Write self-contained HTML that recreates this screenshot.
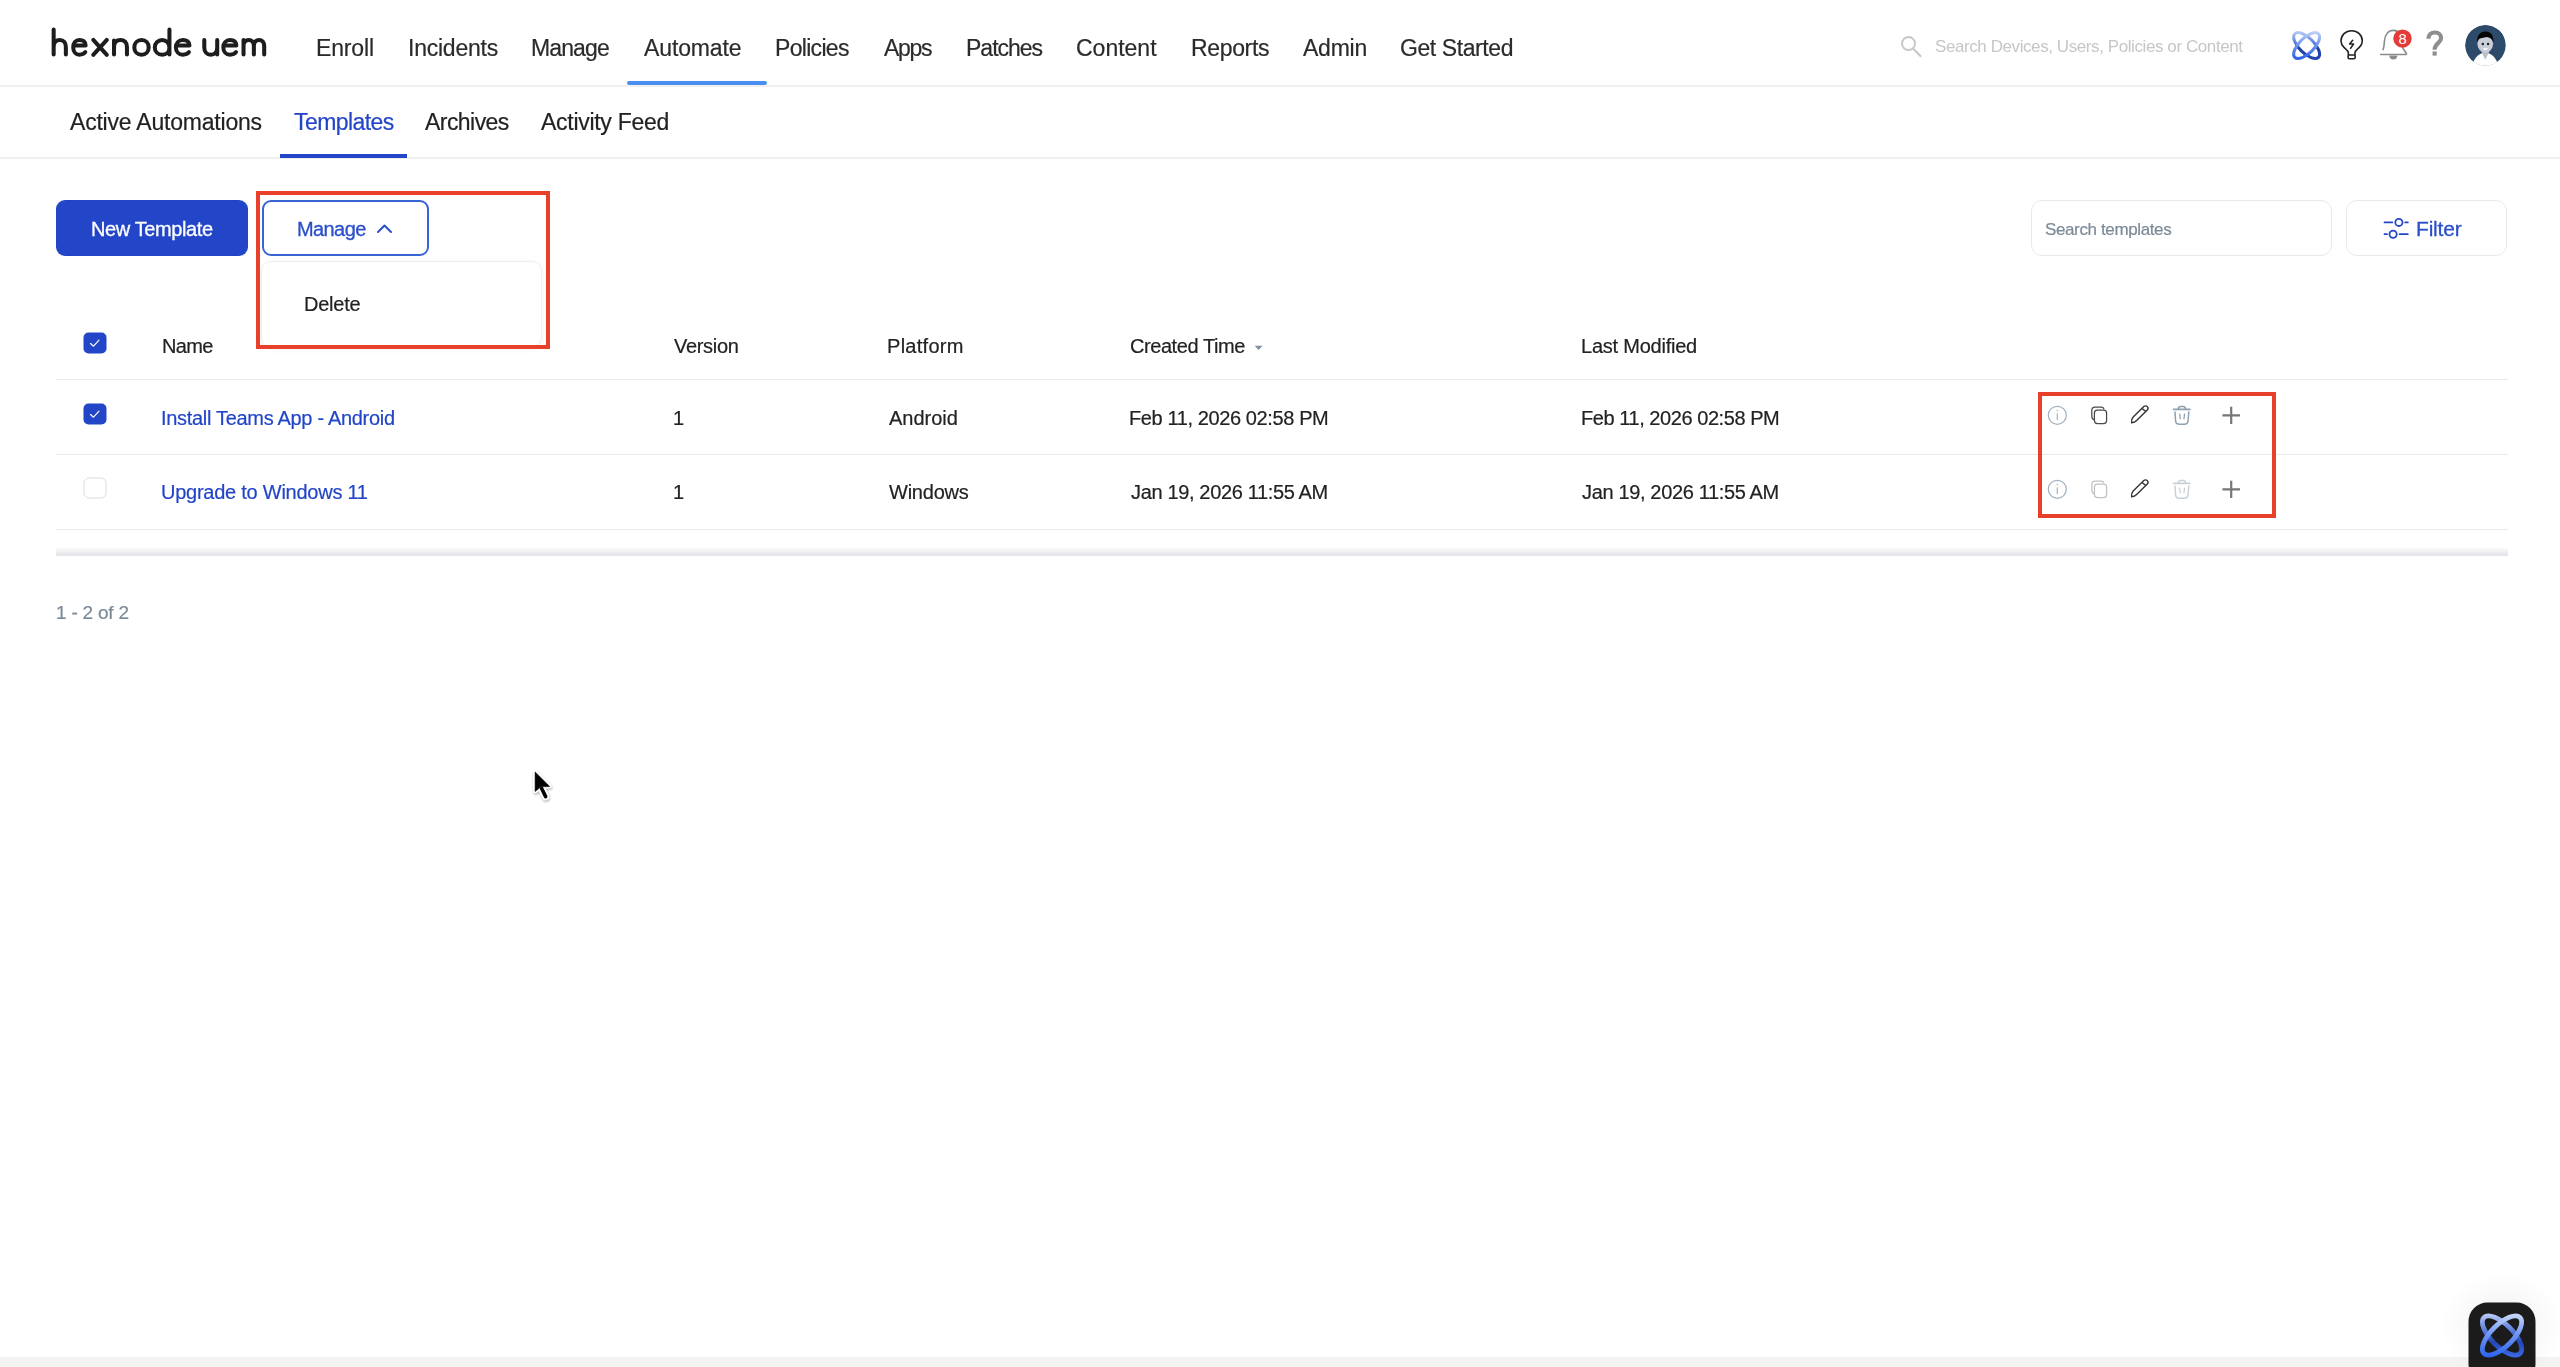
<!DOCTYPE html><html><head><meta charset="utf-8">
<style>
*{margin:0;padding:0;box-sizing:border-box}
html,body{width:2560px;height:1367px;overflow:hidden;background:#fff;font-family:"Liberation Sans",sans-serif;color:#222}
.a{position:absolute;white-space:nowrap}
div.a{will-change:transform;-webkit-text-stroke:0.2px currentColor}
.nav{font-size:23px;color:#2b2b2b;top:33px}
.sub{font-size:23px;color:#222;top:108px}
.th{font-size:20px;color:#222;top:335px}
.td{font-size:20px;color:#222}
.lnk{color:#2245c8}
</style></head><body>
<!-- top header -->
<div class="a" style="left:0;top:85px;width:2560px;height:2px;background:#efefef"></div>
<svg class="a" style="left:45px;top:20px" width="230" height="45" viewBox="0 0 2560 501"><g fill="none" stroke="#1d1d1d" stroke-width="45" stroke-linecap="round" stroke-linejoin="round">
<path d="M96,105 V385 M96,300 C96,248 126,222 164,222 C206,222 232,250 232,300 V385"></path>
<path d="M315,283 H452 C452,244 424,222 383,222 C340,222 314,258 314,305 C314,352 344,386 384,386 C414,386 436,374 448,358"></path>
<path d="M537,222 L688,388 M688,222 L537,388"></path>
<path d="M768,385 V300 C768,250 798,222 840,222 C882,222 912,250 912,300 V385 M768,300 V228"></path>
<path d="M1075,222 C1122,222 1154,258 1154,305 C1154,352 1122,386 1075,386 C1028,386 994,352 994,305 C994,258 1028,222 1075,222 Z"></path>
<path d="M1385,105 V385 M1385,305 C1385,258 1350,222 1305,222 C1258,222 1222,258 1222,305 C1222,352 1258,386 1305,386 C1350,386 1385,352 1385,305"></path>
<path d="M1458,283 H1608 C1608,244 1578,222 1535,222 C1490,222 1457,258 1457,305 C1457,352 1490,386 1535,386 C1566,386 1590,374 1602,358"></path>
<path d="M1773,222 V305 C1773,355 1802,386 1845,386 C1888,386 1917,355 1917,305 V222 M1917,300 V385"></path>
<path d="M1985,283 H2130 C2130,244 2102,222 2060,222 C2016,222 1985,258 1985,305 C1985,352 2016,386 2060,386 C2090,386 2114,374 2126,358"></path>
<path d="M2210,385 V222 M2210,290 C2210,248 2236,222 2268,222 C2302,222 2325,248 2325,290 V385 M2325,290 C2325,248 2350,222 2383,222 C2417,222 2440,248 2440,290 V385"></path>
</g></svg>
<div class="a nav" style="left: 316.4px; top: 34.6px; letter-spacing: -0.16px;">Enroll</div>
<div class="a nav" style="left: 408px; top: 34.6px; letter-spacing: -0.236px;">Incidents</div>
<div class="a nav" style="left: 531.4px; top: 34.6px; letter-spacing: -0.88px;">Manage</div>
<div class="a nav" style="left: 644px; top: 34.6px; letter-spacing: -0.12px;">Automate</div>
<div class="a nav" style="left: 774.8px; top: 34.6px; letter-spacing: -0.691px;">Policies</div>
<div class="a nav" style="left: 884px; top: 34.6px; letter-spacing: -1.333px;">Apps</div>
<div class="a nav" style="left: 966px; top: 34.6px; letter-spacing: -1px;">Patches</div>
<div class="a nav" style="left: 1076px; top: 34.6px; letter-spacing: 0px;">Content</div>
<div class="a nav" style="left: 1191px; top: 34.6px; letter-spacing: -0.34px;">Reports</div>
<div class="a nav" style="left: 1303.2px; top: 34.6px; letter-spacing: -0.25px;">Admin</div>
<div class="a nav" style="left: 1400.2px; top: 34.6px; letter-spacing: -0.42px;">Get Started</div>
<div class="a" style="left:627px;top:81px;width:140px;height:4px;border-radius:2px;background:#4a8ff0"></div>

<svg class="a" style="left:1890px;top:25px" width="40" height="40" viewBox="0 0 40 40"><circle cx="18.5" cy="18.5" r="6.5" fill="none" stroke="#c5c7c9" stroke-width="2"></circle><path d="M23.5,24 L30.5,31" stroke="#c5c7c9" stroke-width="2.2" stroke-linecap="round"></path></svg>
<div class="a" style="left: 1935px; top: 36.6px; font-size: 17px; color: rgb(196, 198, 200); letter-spacing: -0.415px;; -webkit-text-stroke:0px">Search Devices, Users, Policies or Content</div>
<svg class="a" style="left:2280px;top:20px" width="140" height="50" viewBox="0 0 2560 914">
<defs><linearGradient id="ag" gradientUnits="userSpaceOnUse" x1="487" y1="200" x2="487" y2="735" gradientTransform="rotate(45 487 467)"><stop offset="0" stop-color="#c6d6fa"/><stop offset="0.45" stop-color="#7096ee"/><stop offset="1" stop-color="#2b5de8"/></linearGradient>
<linearGradient id="ag2" gradientUnits="userSpaceOnUse" x1="487" y1="200" x2="487" y2="735" gradientTransform="rotate(-45 487 467)"><stop offset="0" stop-color="#bdd0f8"/><stop offset="0.4" stop-color="#5a80e0"/><stop offset="0.6" stop-color="#1f3fa6"/><stop offset="1" stop-color="#2446b0"/></linearGradient></defs>
<ellipse cx="487" cy="467" rx="305" ry="138" transform="rotate(45 487 467)" fill="none" stroke="url(#ag2)" stroke-width="56"></ellipse>
<ellipse cx="487" cy="467" rx="305" ry="138" transform="rotate(-45 487 467)" fill="none" stroke="url(#ag)" stroke-width="56"></ellipse>
<g fill="none" stroke="#222" stroke-width="29" stroke-linejoin="round" stroke-linecap="round">
<path d="M1250,640 V600 C1250,560 1200,530 1170,500 C1130,460 1115,420 1115,385 C1115,275 1200,195 1310,195 C1420,195 1505,275 1505,385 C1505,420 1490,460 1450,500 C1420,530 1370,560 1370,600 V640"></path>
<rect x="1245" y="640" width="130" height="68" rx="22"></rect>
<path d="M1330,370 L1272,438 L1345,438 L1290,518"></path>
</g>
<g fill="none" stroke="#8a8c8e" stroke-width="30" stroke-linejoin="round" stroke-linecap="round">
<path d="M1840,630 H2305 C2315,630 2315,610 2300,595 L2250,520 C2230,480 2230,420 2230,380 C2230,270 2170,190 2075,190 C1980,190 1920,270 1910,380 C1905,440 1905,490 1885,540"></path>
</g>
<path d="M2000,650 A72,72 0 0 0 2144,650 Z" fill="#8a8c8e"></path>
<circle cx="2240" cy="340" r="168" fill="#e53a3a"></circle>
<text x="2240" y="437" font-family="Liberation Sans" font-size="270" fill="#fff" text-anchor="middle">8</text>
</svg>
<svg class="a" style="left:2415px;top:15px" width="100" height="60" viewBox="0 0 2278 1367">
<path d="M305,540 C305,450 372,398 455,398 C545,398 595,458 595,525 C595,600 522,630 482,688 C457,722 445,745 445,790" fill="none" stroke="#8e8e8e" stroke-width="95"></path>
<rect x="400" y="830" width="95" height="95" fill="#8e8e8e"></rect>
<defs><clipPath id="av"><circle cx="1605" cy="690" r="465"></circle></clipPath></defs>
<g clip-path="url(#av)">
<circle cx="1605" cy="690" r="465" fill="#2d4a6b"></circle>
<ellipse cx="1600" cy="1230" rx="300" ry="370" fill="#fff"></ellipse>
<path d="M1510,820 L1600,1020 L1700,820 Z" fill="#b9bfc7"></path>
<ellipse cx="1600" cy="650" rx="180" ry="205" fill="#c9ced9"></ellipse>
<path d="M1420,620 C1400,470 1480,380 1600,375 C1720,370 1800,450 1785,630 C1760,560 1720,510 1640,500 C1560,520 1480,520 1450,560 C1440,600 1430,610 1420,620 Z" fill="#050505"></path>
<circle cx="1545" cy="660" r="28" fill="#222"></circle><circle cx="1665" cy="660" r="28" fill="#222"></circle>
<path d="M1535,760 Q1600,830 1675,760 Z" fill="#fff"></path>
</g>
</svg>

<!-- sub nav -->
<div class="a" style="left:0;top:157px;width:2560px;height:2px;background:#efefef"></div>
<div class="a sub" style="left: 70.4px; top: 109.3px; letter-spacing: -0.205px;">Active Automations</div>
<div class="a sub lnk" style="left: 293.6px; top: 109.3px; letter-spacing: -0.575px;">Templates</div>
<div class="a sub" style="left: 424.8px; top: 109.3px; letter-spacing: -0.548px;">Archives</div>
<div class="a sub" style="left: 540.6px; top: 109.3px; letter-spacing: -0.281px;">Activity Feed</div>
<div class="a" style="left:280px;top:154px;width:127px;height:4px;background:#2346c9"></div>

<!-- toolbar -->
<div class="a" style="left:56px;top:200px;width:192px;height:56px;border-radius:9px;background:#2346c9"></div>
<div class="a" style="left: 90.6px; top: 217.6px; color: rgb(255, 255, 255); font-size: 20px; letter-spacing: -0.391px;; -webkit-text-stroke:0.3px currentColor">New Template</div>
<div class="a" style="left:262px;top:200px;width:167px;height:56px;border-radius:9px;border:2px solid #3a63d6"></div>
<div class="a" style="left: 297px; top: 217.6px; color: rgb(42, 79, 201); font-size: 20px; letter-spacing: -0.6px;; -webkit-text-stroke:0.3px currentColor">Manage</div>
<svg class="a" style="left:370px;top:215px" width="30" height="25" viewBox="0 0 30 25"><path d="M8,17 L14.5,10.5 L21,17" fill="none" stroke="#2a4fc9" stroke-width="2" stroke-linecap="round" stroke-linejoin="round"></path></svg>
<div class="a" style="left:261px;top:261px;width:281px;height:86px;border-radius:10px;border:1px solid #eee;background:#fff;box-shadow:0 2px 6px rgba(0,0,0,0.06)"></div>
<div class="a" style="left: 304.2px; top: 292.6px; font-size: 20px; color: rgb(34, 34, 34); letter-spacing: -0.24px;">Delete</div>
<div class="a" style="left:256px;top:191px;width:294px;height:158px;border:4px solid #e8402a"></div>

<div class="a" style="left:2031px;top:200px;width:301px;height:56px;border-radius:11px;border:1px solid #e9e9ed"></div>
<div class="a" style="left: 2045.4px; top: 220.4px; font-size: 17px; color: rgb(123, 138, 151); letter-spacing: -0.376px;">Search templates</div>
<div class="a" style="left:2346px;top:200px;width:161px;height:56px;border-radius:11px;border:1px solid #e9e9ed"></div>
<svg class="a" style="left:2380px;top:212px" width="34" height="32" viewBox="0 0 34 32"><g fill="none" stroke="#2346c9" stroke-width="1.8" stroke-linecap="round">
<path d="M4.5,10.4 H12.3 M25.2,10.4 H27.8 M4.5,22.2 H7 M19.6,22.2 H27.8"></path><circle cx="18.9" cy="10.4" r="3.6"></circle><circle cx="13.1" cy="22.2" r="3.6"></circle></g></svg>
<div class="a" style="left: 2416px; top: 217px; font-size: 21px; color: rgb(42, 79, 201); letter-spacing: -0.2px;; -webkit-text-stroke:0.3px currentColor">Filter</div>

<!-- table -->
<svg class="a" style="left:83px;top:332px" width="24" height="22" viewBox="0 0 24 22"><rect x="0.5" y="0.5" width="23" height="21" rx="5" fill="#2346c9"></rect><path d="M7.5,11.5 L10.5,14.2 L16,8.2" fill="none" stroke="#fff" stroke-width="1.15" stroke-linecap="round" stroke-linejoin="round"></path></svg>
<div class="a th" style="left: 161.6px; top: 335.4px; letter-spacing: -0.667px;">Name</div>
<div class="a th" style="left: 674px; top: 334.9px; letter-spacing: -0.299px;">Version</div>
<div class="a th" style="left: 887px; top: 335.4px; letter-spacing: 0.286px;">Platform</div>
<div class="a th" style="left: 1130.4px; top: 335.4px; letter-spacing: -0.434px;">Created Time</div>
<svg class="a" style="left:1250px;top:340px" width="16" height="14" viewBox="0 0 16 14"><path d="M4.7,5.8 L12.5,5.8 L8.6,10 Z" fill="#7c90a3"></path></svg>
<div class="a th" style="left: 1581.4px; top: 335.4px; letter-spacing: -0.228px;">Last Modified</div>
<div class="a" style="left:56px;top:379px;width:2452px;height:1px;background:#e8eaed"></div>

<svg class="a" style="left:83px;top:403px" width="24" height="22" viewBox="0 0 24 22"><rect x="0.5" y="0.5" width="23" height="21" rx="5" fill="#2346c9"></rect><path d="M7.5,11.5 L10.5,14.2 L16,8.2" fill="none" stroke="#fff" stroke-width="1.15" stroke-linecap="round" stroke-linejoin="round"></path></svg>
<div class="a td lnk" style="left: 161px; top: 406.80px; letter-spacing: -0.307px;">Install Teams App - Android</div>
<div class="a td" style="left: 673.2px; top: 406.80px; letter-spacing: 0px;">1</div>
<div class="a td" style="left: 889px; top: 406.80px; letter-spacing: 0px;">Android</div>
<div class="a td" style="left: 1129.4px; top: 406.80px; letter-spacing: -0.39px;">Feb 11, 2026 02:58 PM</div>
<div class="a td" style="left: 1581.4px; top: 406.80px; letter-spacing: -0.44px;">Feb 11, 2026 02:58 PM</div>
<div class="a" style="left:56px;top:454px;width:2452px;height:1px;background:#e8eaed"></div>

<svg class="a" style="left:83px;top:477px" width="24" height="22" viewBox="0 0 24 22"><rect x="1" y="1" width="22" height="20" rx="5" fill="#fff" stroke="#dcdcdc" stroke-width="1"></rect></svg>
<div class="a td lnk" style="left: 161px; top: 481.20px; letter-spacing: -0.25px;">Upgrade to Windows 11</div>
<div class="a td" style="left: 673.2px; top: 481.20px; letter-spacing: 0px;">1</div>
<div class="a td" style="left: 889px; top: 481.20px; letter-spacing: -0.231px;">Windows</div>
<div class="a td" style="left: 1131.4px; top: 481.20px; letter-spacing: -0.35px;">Jan 19, 2026 11:55 AM</div>
<div class="a td" style="left: 1582.4px; top: 481.20px; letter-spacing: -0.35px;">Jan 19, 2026 11:55 AM</div>
<div class="a" style="left:56px;top:529px;width:2452px;height:1px;background:#e8eaed"></div>

<svg class="a" style="left:2040px;top:398px" width="220" height="38" viewBox="0 0 220 38"><g fill="none" stroke-linecap="round" stroke-linejoin="round">
<circle cx="17.3" cy="17.3" r="9" stroke="#a3b1bf" stroke-width="1.2"></circle><path d="M17.3,15.8 V21.6" stroke="#a3b1bf" stroke-width="1.2"></path><circle cx="17.3" cy="12.6" r="0.75" fill="#a3b1bf" stroke="none"></circle>
<path d="M54.5,22 C52.2,21.5 51.8,20 51.8,18 V12.5 C51.8,10.4 53,9.2 55,9.2 H61.5 C62.8,9.2 63.5,9.8 63.8,10.8" stroke="#4a4a4a" stroke-width="1.25"></path>
<rect x="54.4" y="12.2" width="12.2" height="13.4" rx="3" stroke="#4a4a4a" stroke-width="1.25"></rect>
<path d="M91.6,24.8 C91.2,22.5 91.8,20.5 93.2,19 L103.8,8.6 C104.8,7.6 106.4,7.6 107.3,8.6 C108.2,9.6 108.2,11 107.3,12 L96.6,22.5 C95.3,23.8 93.5,24.6 91.6,24.8 Z M102.2,10.4 L105.6,13.6" stroke="#333" stroke-width="1.4"></path>
</g></svg>
<svg class="a" style="left:2160px;top:398px" width="90" height="38" viewBox="0 0 90 38"><g fill="none" stroke-linecap="round" stroke-linejoin="round">
<path d="M13.5,11.4 H30" stroke="#8fa0b0" stroke-width="1.6"></path><path d="M18.3,11.2 C18.3,9.2 19,8.4 20.5,8.4 H23.5 C25,8.4 25.5,9.2 25.6,11.2" stroke="#8fa0b0" stroke-width="1.5"></path>
<path d="M15,14 L15.6,23 C15.8,25.3 17,26.2 19.5,26.2 H24.2 C26.7,26.2 27.8,25.3 28,23 L28.8,14" stroke="#8fa0b0" stroke-width="1.5"></path>
<path d="M19.8,16.2 L20.2,20.8 M24.5,16.2 L24,20.8" stroke="#8fa0b0" stroke-width="1.3"></path>
<path d="M71.2,8.8 V26 M62.4,17.3 H80" stroke="#777" stroke-width="2.2" stroke-linecap="butt"></path>
</g></svg>
<svg class="a" style="left:2040px;top:472px" width="220" height="38" viewBox="0 0 220 38"><g fill="none" stroke-linecap="round" stroke-linejoin="round">
<circle cx="17.3" cy="17.3" r="9" stroke="#a3b1bf" stroke-width="1.2"></circle><path d="M17.3,15.8 V21.6" stroke="#a3b1bf" stroke-width="1.2"></path><circle cx="17.3" cy="12.6" r="0.75" fill="#a3b1bf" stroke="none"></circle>
<path d="M54.5,22 C52.2,21.5 51.8,20 51.8,18 V12.5 C51.8,10.4 53,9.2 55,9.2 H61.5 C62.8,9.2 63.5,9.8 63.8,10.8" stroke="#c2c2c2" stroke-width="1.25"></path>
<rect x="54.4" y="12.2" width="12.2" height="13.4" rx="3" stroke="#c2c2c2" stroke-width="1.25"></rect>
<path d="M91.6,24.8 C91.2,22.5 91.8,20.5 93.2,19 L103.8,8.6 C104.8,7.6 106.4,7.6 107.3,8.6 C108.2,9.6 108.2,11 107.3,12 L96.6,22.5 C95.3,23.8 93.5,24.6 91.6,24.8 Z M102.2,10.4 L105.6,13.6" stroke="#333" stroke-width="1.4"></path>
</g></svg>
<svg class="a" style="left:2160px;top:472px" width="90" height="38" viewBox="0 0 90 38"><g fill="none" stroke-linecap="round" stroke-linejoin="round">
<path d="M13.5,11.4 H30" stroke="#c9d1d9" stroke-width="1.6"></path><path d="M18.3,11.2 C18.3,9.2 19,8.4 20.5,8.4 H23.5 C25,8.4 25.5,9.2 25.6,11.2" stroke="#c9d1d9" stroke-width="1.5"></path>
<path d="M15,14 L15.6,23 C15.8,25.3 17,26.2 19.5,26.2 H24.2 C26.7,26.2 27.8,25.3 28,23 L28.8,14" stroke="#c9d1d9" stroke-width="1.5"></path>
<path d="M19.8,16.2 L20.2,20.8 M24.5,16.2 L24,20.8" stroke="#c9d1d9" stroke-width="1.3"></path>
<path d="M71.2,8.8 V26 M62.4,17.3 H80" stroke="#777" stroke-width="2.2" stroke-linecap="butt"></path>
</g></svg>
<div class="a" style="left:2038px;top:392px;width:238px;height:126px;border:4px solid #e8402a"></div>

<div class="a" style="left:56px;top:548px;width:2452px;height:8px;background:linear-gradient(#fafafb,#f1f2f4 40%,#e5e7eb 70%,#e3e5e9)"></div>
<div class="a" style="left: 56px; top: 602px; font-size: 19px; color: rgb(123, 138, 151); letter-spacing: -0.222px;">1 - 2 of 2</div>

<div class="a" style="left:0;top:1357px;width:2560px;height:10px;background:#f3f3f3"></div>
<svg class="a" style="left:500px;top:740px" width="100" height="80" viewBox="0 0 1709 1367"><defs><filter id="cs" x="-50%" y="-50%" width="200%" height="200%"><feGaussianBlur stdDeviation="16"/></filter></defs>
<g transform="translate(8,22)" opacity="0.3" filter="url(#cs)"><path d="M600,545 L600,880 L700,800 L850,795 Z" fill="#000" stroke="#000" stroke-width="70" stroke-linejoin="round"/><path d="M712,830 L780,968" stroke="#000" stroke-width="130" stroke-linecap="round"/></g>
<path d="M600,545 L600,880 L700,800 L850,795 Z" fill="#fff" stroke="#fff" stroke-width="70" stroke-linejoin="round"/>
<path d="M712,830 L780,968" stroke="#fff" stroke-width="130" stroke-linecap="round"/>
<path d="M600,545 L600,880 L700,800 L850,795 Z" fill="#000" stroke="#000" stroke-width="10" stroke-linejoin="round"/>
<path d="M712,830 L780,968" stroke="#000" stroke-width="62" stroke-linecap="round"/>
</svg>
<div class="a" style="left:2440px;top:1272px;width:124px;height:110px;border-radius:50%;background:radial-gradient(ellipse at center, rgba(0,0,0,0.035) 30%, rgba(0,0,0,0) 70%)"></div>
<svg class="a" style="left:2468px;top:1302px" width="68" height="65" viewBox="0 0 68 65"><rect x="0.5" y="0.5" width="67" height="80" rx="19" fill="#1b1b1b"/>
<defs><linearGradient id="cg" gradientUnits="userSpaceOnUse" x1="34" y1="12" x2="34" y2="55" gradientTransform="rotate(45 34 33.5)"><stop offset="0" stop-color="#c9d8fb"/><stop offset="0.5" stop-color="#6d93f0"/><stop offset="1" stop-color="#2c63f0"/></linearGradient>
<linearGradient id="cg2" gradientUnits="userSpaceOnUse" x1="34" y1="12" x2="34" y2="55" gradientTransform="rotate(-45 34 33.5)"><stop offset="0" stop-color="#b7c9f5"/><stop offset="0.45" stop-color="#4a70d8"/><stop offset="0.65" stop-color="#2447b8"/><stop offset="1" stop-color="#3a68e6"/></linearGradient></defs>
<ellipse cx="34" cy="33.5" rx="25.5" ry="11" transform="rotate(45 34 33.5)" fill="none" stroke="url(#cg2)" stroke-width="4.8"/>
<ellipse cx="34" cy="33.5" rx="25.5" ry="11" transform="rotate(-45 34 33.5)" fill="none" stroke="url(#cg)" stroke-width="4.8"/>
</svg>

</body></html>
